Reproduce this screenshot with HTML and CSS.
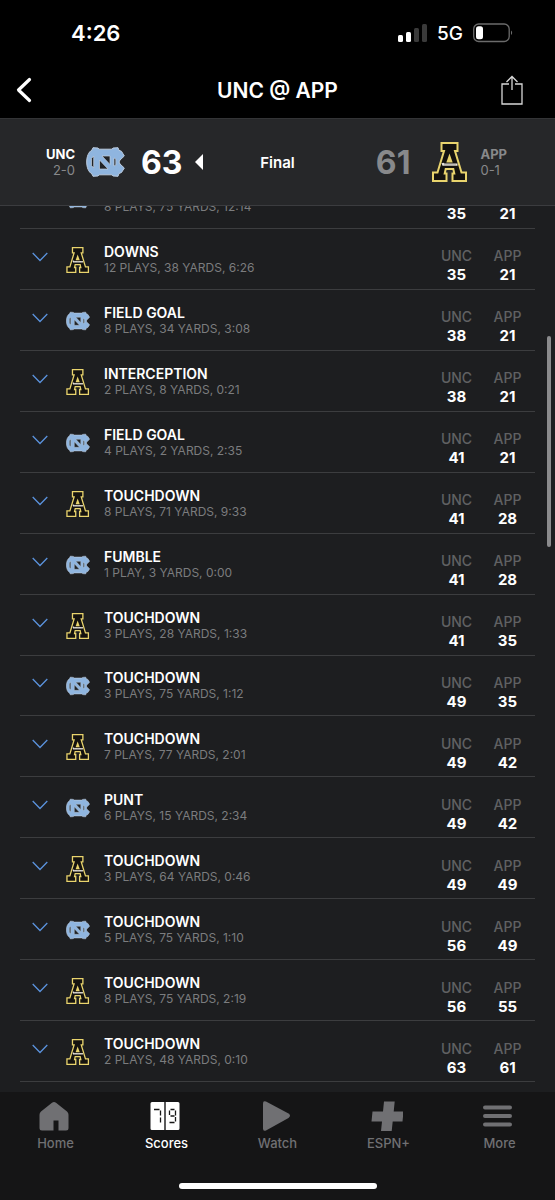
FILE: index.html
```
<!DOCTYPE html>
<html lang="en">
<head>
  <meta charset="utf-8">
  <meta name="viewport" content="width=device-width, initial-scale=1">
  <title>UNC @ APP</title>
  <link rel="stylesheet" href="styles.css">
</head>
<body>
  <!-- shared team logos -->
  <svg class="sprites" aria-hidden="true">
    <symbol id="logo-unc" viewBox="0 0 39 30">
      <path fill="#8fb5df" stroke="#bccbdd" stroke-width="1" stroke-linejoin="round" fill-rule="evenodd"
        d="M6 3 7 .7l5 .3 1 1.2h13L27 1l5-.3 1 2.6 2.500 1L38.300 9 34 13l-1 2 1 2 4.300 4-2.800 4.500-2.500 1-1 2.800-5-.3-1-1.200H13L12 29l-5 .3L6 27C2.500 25 .7 20.500.7 15S2.500 5 6 3z"/>
      <path fill="#202326" stroke="#c5d0dc" stroke-width=".7"
        d="M5.500 11.500 7.700 9v12l-2.200-2.500zM13.500 13l8.500 9h-8.500zM16 9h8v8.500zM28 11l1.800 1v6L28 19z"/>
    </symbol>
    <symbol id="logo-app" viewBox="0 0 36 40">
      <path fill="#14120f" stroke="#e9d46d" stroke-width="2" fill-rule="evenodd"
        d="M9.500 1h16v8H23l6.500 21.500H34V39H20.500v-7.500h1.800L21.300 27h-7.600l-1 4.500h1.800V39H1v-8.500h4.500L12 9H9.500z"/>
      <path fill="#e9d46d" d="M17.500 11.500 20.700 20.500h-6.400z"/>
      <path fill="#e6e2dc" d="M9.500 21.200l2-.4 1 .8h13v2.200H10.500z"/>
      <path fill="none" stroke="#35312c" stroke-width=".6" stroke-dasharray="1 1" d="M12.500 22.800h12"/>
    </symbol>
  </svg>

  <header class="top">
    <div class="status">
      <span class="time">4:26</span>
      <div class="status-right">
        <svg class="signal" viewBox="0 0 29 18">
          <rect x="0" y="11" width="5" height="7" rx="1.500" fill="#fff"/>
          <rect x="8" y="8" width="5" height="10" rx="1.500" fill="#fff"/>
          <rect x="16" y="4" width="5" height="14" rx="1.500" fill="#3a3a3a"/>
          <rect x="24" y="0" width="5" height="18" rx="1.500" fill="#3a3a3a"/>
        </svg>
        <span class="network">5G</span>
        <svg class="battery" viewBox="0 0 41 20">
          <rect x=".7" y="1" width="35.500" height="17.500" rx="5" fill="none" stroke="#6b6b6b" stroke-width="1.300"/>
          <rect x="3" y="3.300" width="7" height="13" rx="2.500" fill="#fff"/>
          <path d="M38 7.500q2.300 2.200 0 4.600z" fill="#6b6b6b"/>
        </svg>
      </div>
    </div>
    <div class="navbar">
      <button class="nav-btn" aria-label="Back">
        <svg class="back" viewBox="0 0 16 26"><path d="M13.500 2.500 2.500 13l11 10.500" fill="none" stroke="#fff" stroke-width="3.200" stroke-linecap="round" stroke-linejoin="round"/></svg>
      </button>
      <h1 class="title">UNC @ APP</h1>
      <button class="nav-btn" aria-label="Share">
        <svg class="share" viewBox="0 0 22 30"><path d="M8 9H1v20h20V9h-7M11 15V1.500M5.500 7 11 1.500 16.500 7" fill="none" stroke="#d8d8d8" stroke-width="1.300"/></svg>
      </button>
    </div>
  </header>

  <section class="scoreboard">
    <div class="team team-away">
      <div class="team-info">
        <div class="team-name">UNC</div>
        <div class="record">2-0</div>
      </div>
      <svg class="big-unc"><use href="#logo-unc"/></svg>
      <span class="points">63</span>
      <svg class="winner" viewBox="0 0 8 16"><path d="M8 0v16L0 8z" fill="#fff"/></svg>
    </div>
    <div class="game-state">Final</div>
    <div class="team team-home">
      <span class="points">61</span>
      <svg class="big-app"><use href="#logo-app"/></svg>
      <div class="team-info">
        <div class="team-name">APP</div>
        <div class="record">0-1</div>
      </div>
    </div>
  </section>

  <main class="feed">
    <ul class="drives" id="drives"></ul>
    <div class="scroll-thumb"></div>
  </main>

  <nav class="tabs">
    <a class="tab" href="#home">
      <svg viewBox="0 0 32 32"><path fill="#707073" d="M14 2.800q2-1.600 4 0l11 8.700q1.500 1.300 1.500 3.200V28q0 2.500-2.500 2.500h-7.500v-10h-5v10H4Q1.500 30.500 1.500 28V14.700q0-1.900 1.500-3.200z"/></svg>
      Home
    </a>
    <a class="tab active" href="#scores">
      <svg viewBox="0 0 32 32">
        <path fill="#fff" d="M3 2h12.300v28H3q-1.500 0-1.500-1.500v-25Q1.500 2 3 2zM16.700 2H29q1.500 0 1.500 1.500v25Q30.500 30 29 30H16.700z"/>
        <path fill="none" stroke="#161616" stroke-width="1.300" d="M5 9.500h5.500M11.500 10.500v5M11.500 17.500v5M21.500 9.500h4M20.500 10.500v4.500M21.500 16h4M26.500 10.500v5M26.500 17v4.500M20.500 22.500h5"/>
      </svg>
      Scores
    </a>
    <a class="tab" href="#watch">
      <svg viewBox="0 0 32 32"><path fill="#707073" d="M3 3.500Q3 .3 6 1.600l22.500 12q3 2 0 4.300L6 30.400Q3 31.700 3 28.500z"/></svg>
      Watch
    </a>
    <a class="tab" href="#espn-plus">
      <svg viewBox="0 0 32 32"><path fill="#707073" d="M13 1.500h10.700l-1 10h9.800l-1 10H21.700l-1 9.500H10l1-9.500H.5l1-10H12z"/></svg>
      ESPN+
    </a>
    <a class="tab" href="#more">
      <svg viewBox="0 0 32 32"><path stroke="#707073" stroke-width="4" stroke-linecap="round" d="M3 7.500h25M3 16h25M3 24.500h25"/></svg>
      More
    </a>
    <div class="home-indicator"></div>
  </nav>

  <script>
    // team, result, summary, UNC score, APP score
    const drives = [
      ['unc', 'PUNT', '8 PLAYS, 75 YARDS, 12:14', 35, 21],
      ['app', 'DOWNS', '12 PLAYS, 38 YARDS, 6:26', 35, 21],
      ['unc', 'FIELD GOAL', '8 PLAYS, 34 YARDS, 3:08', 38, 21],
      ['app', 'INTERCEPTION', '2 PLAYS, 8 YARDS, 0:21', 38, 21],
      ['unc', 'FIELD GOAL', '4 PLAYS, 2 YARDS, 2:35', 41, 21],
      ['app', 'TOUCHDOWN', '8 PLAYS, 71 YARDS, 9:33', 41, 28],
      ['unc', 'FUMBLE', '1 PLAY, 3 YARDS, 0:00', 41, 28],
      ['app', 'TOUCHDOWN', '3 PLAYS, 28 YARDS, 1:33', 41, 35],
      ['unc', 'TOUCHDOWN', '3 PLAYS, 75 YARDS, 1:12', 49, 35],
      ['app', 'TOUCHDOWN', '7 PLAYS, 77 YARDS, 2:01', 49, 42],
      ['unc', 'PUNT', '6 PLAYS, 15 YARDS, 2:34', 49, 42],
      ['app', 'TOUCHDOWN', '3 PLAYS, 64 YARDS, 0:46', 49, 49],
      ['unc', 'TOUCHDOWN', '5 PLAYS, 75 YARDS, 1:10', 56, 49],
      ['app', 'TOUCHDOWN', '8 PLAYS, 75 YARDS, 2:19', 56, 55],
      ['app', 'TOUCHDOWN', '2 PLAYS, 48 YARDS, 0:10', 63, 61]
    ];

    document.getElementById('drives').innerHTML = drives.map(([team, result, summary, unc, app]) => `
      <li class="drive">
        <button class="expand" aria-label="Show plays">
          <svg viewBox="0 0 16 10"><path d="M.7 1 8 8.500 15.300 1" fill="none" stroke="#5b93dd" stroke-width="1.300"/></svg>
        </button>
        <svg class="drive-logo"><use href="#logo-${team}"/></svg>
        <div class="drive-text">
          <div class="result">${result}</div>
          <div class="summary">${summary}</div>
        </div>
        <div class="score"><span>UNC</span><b>${unc}</b></div>
        <div class="score"><span>APP</span><b>${app}</b></div>
      </li>`).join('');
  </script>
</body>
</html>
```
FILE: styles.css
```
* {
  box-sizing: border-box;
}

body {
  display: flex;
  flex-direction: column;
  height: 100vh;
  margin: 0;
  background: #1d1e20;
  color: #fff;
  font-family: Inter, "Liberation Sans", sans-serif;
  overflow: hidden;
}

button {
  background: none;
  border: none;
  padding: 0;
  cursor: pointer;
}

svg {
  display: block;
  flex: none;
}

.sprites {
  position: absolute;
  width: 0;
  height: 0;
}

/* status bar + title */
.top {
  background: #000;
  border-bottom: 1px solid #333436;
}

.status {
  display: flex;
  justify-content: space-between;
  align-items: center;
  height: 62px;
  padding: 4px 41px 0 71px;
}

.time {
  font-size: 22px;
  font-weight: 600;
}

.status-right {
  display: flex;
  align-items: center;
  gap: 10px;
}

.signal {
  width: 29px;
  height: 18px;
}

.network {
  font-size: 19px;
  font-weight: 500;
}

.battery {
  width: 41px;
  height: 20px;
}

.navbar {
  display: flex;
  justify-content: space-between;
  align-items: center;
  height: 56px;
  padding: 0 16px;
}

.nav-btn {
  width: 38px;
}

.back {
  width: 16px;
  height: 26px;
}

.share {
  width: 22px;
  height: 30px;
}

.title {
  margin: 0;
  font-size: 21px;
  font-weight: 600;
}

/* score header */
.scoreboard {
  display: grid;
  grid-template-columns: 1fr auto 1fr;
  align-items: center;
  height: 87px;
  flex: none;
  background: #262729;
  border-bottom: 1px solid #3b3c3f;
}

.team {
  display: flex;
  align-items: center;
}

.team-away {
  padding-left: 46px;
}

.team-home {
  justify-content: flex-end;
  padding-right: 48px;
  color: #88898b;
}

.team-away .team-info {
  text-align: right;
}

.team-name {
  font-size: 13px;
  line-height: 16px;
  font-weight: 700;
}

.record {
  color: #88898b;
  font-size: 13px;
  line-height: 16px;
}

.big-unc {
  width: 39px;
  height: 30px;
  margin: 0 16px 0 11px;
}

.big-app {
  width: 36px;
  height: 40px;
  margin: 0 12px 0 22px;
}

.points {
  font-size: 32px;
  font-weight: 700;
}

.winner {
  width: 8px;
  height: 16px;
  margin-left: 13px;
}

.game-state {
  font-size: 15px;
  font-weight: 600;
}

/* drive list */
.feed {
  display: flex;
  flex: 1;
  min-height: 0;
  position: relative;
  overflow: hidden;
}

.drives {
  display: flex;
  flex-direction: column;
  flex: 1;
  list-style: none;
  margin: -38px 20px 10px;
  padding: 0;
}

.drive {
  display: flex;
  flex: 1;
  align-items: center;
  min-height: 0;
  padding: 2px 2px 0 0;
  border-bottom: 1px solid #3c3d3f;
}

.expand {
  width: 16px;
  margin: 0 18px 6px 12px;
}

.expand svg {
  width: 16px;
  height: 10px;
}

.drive-logo {
  width: 24px;
  height: 26px;
  margin-right: 14px;
}

.drive-text {
  flex: 1;
}

.result {
  font-size: 14px;
  line-height: 16px;
  font-weight: 600;
}

.summary {
  color: #7b7c7e;
  font-size: 12px;
  line-height: 16px;
}

.score {
  width: 51px;
  padding-top: 11px;
  text-align: center;
  font-size: 15px;
  line-height: 19px;
}

.score span {
  display: block;
  color: #606163;
  font-size: 14px;
  font-weight: 500;
}

.scroll-thumb {
  position: absolute;
  top: 130px;
  right: 4px;
  width: 4px;
  height: 211px;
  border-radius: 2px;
  background: #8b8b8d;
}

/* bottom tabs */
.tabs {
  display: grid;
  grid-template-columns: repeat(5, 1fr);
  height: 108px;
  flex: none;
  position: relative;
  padding-top: 8px;
  background: #151516;
}

.tab {
  display: flex;
  flex-direction: column;
  align-items: center;
  color: #707073;
  font-size: 13px;
  line-height: 16px;
  font-weight: 500;
  text-decoration: none;
  gap: 3px;
}

.tab svg {
  width: 32px;
  height: 32px;
  margin-right: 4px;
}

.tab.active {
  color: #fff;
}

.home-indicator {
  position: absolute;
  bottom: 11px;
  left: 50%;
  width: 198px;
  height: 6px;
  border-radius: 3px;
  background: #fff;
  transform: translateX(-50%);
}
```
